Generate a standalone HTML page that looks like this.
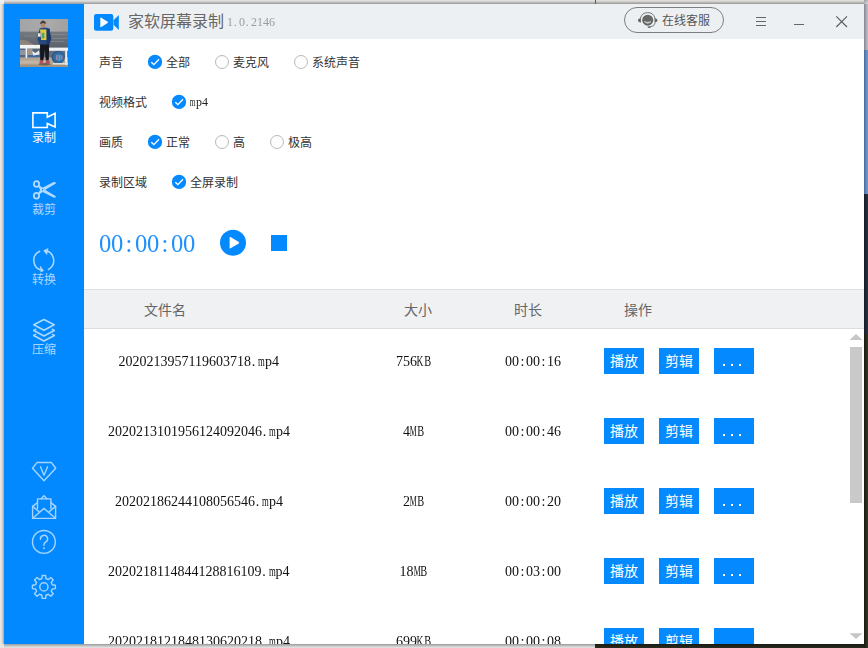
<!DOCTYPE html>
<html lang="zh-CN"><head><meta charset="utf-8"><title>家软屏幕录制</title>
<style>
html,body{margin:0;padding:0}
body{width:868px;height:648px;overflow:hidden;position:relative;background:#e9e9ea;font-family:"Liberation Serif",serif}
.bg{position:absolute}
#win{position:absolute;left:4px;top:4px;width:860px;height:640px;overflow:hidden;background:#fff}
.zh,.ic{position:absolute;display:block;overflow:visible}
.zh text{font-family:"Liberation Sans","Noto Sans CJK SC",sans-serif}
.lat{position:absolute;opacity:.999;white-space:nowrap;font-family:"Liberation Serif",serif}
.lat .c{display:inline-block;text-align:center;overflow:visible}
.lat .q{display:inline-block;transform-origin:50% 50%;margin:0 -4px}
.sr{position:absolute;width:1px;height:1px;overflow:hidden;clip:rect(0 0 0 0);white-space:nowrap}
</style></head>
<body>

<div class="bg" style="left:0;top:0;width:868px;height:4px;background:linear-gradient(#e6e6e7,#d3d3d5 35%,#b5b5b8 65%,#97979b)"></div>
<div class="bg" style="left:596px;top:0;width:272px;height:4px;background:linear-gradient(#e6e4e0,#d3d1cd 35%,#b6b4b1 65%,#989795)"></div>
<div class="bg" style="left:595px;top:0;width:1px;height:4px;background:#5a5a5a"></div>
<div class="bg" style="left:0;top:0;width:4px;height:648px;background:linear-gradient(to right,#eeece8,#e3e0db 35%,#cdc7c1 65%,#aea69f)"></div>
<div class="bg" style="left:0;top:0;width:4px;height:4px;background:#eef0ef"></div>
<div class="bg" style="left:0;top:644px;width:595px;height:4px;background:linear-gradient(#989898,#b8b8b8 35%,#d2d2d2 65%,#e6e6e6)"></div>
<div class="bg" style="left:0;top:644px;width:4px;height:4px;background:#e9e6e1"></div>
<div class="bg" style="left:595px;top:644px;width:273px;height:4px;background:linear-gradient(#191b13,#2a2c20)"></div>
<div class="bg" style="left:864px;top:0;width:4px;height:50px;background:linear-gradient(to right,#85868c,#9b9ca4 35%,#aeafb9 65%,#bdbeca)"></div>
<div class="bg" style="left:864px;top:0;width:4px;height:4px;background:linear-gradient(135deg,#9a9ba0,#d8d9de)"></div>
<div class="bg" style="left:864px;top:50px;width:4px;height:144px;background:linear-gradient(to right,#49699b,#5b7db2 35%,#6a8dc2 65%,#7497cb)"></div>
<div class="bg" style="left:864px;top:194px;width:4px;height:140px;background:linear-gradient(to right,#171c27,#2a3140)"></div>
<div class="bg" style="left:864px;top:334px;width:4px;height:314px;background:linear-gradient(to right,#191b12,#35372a)"></div>
<div id="win">
<aside>
<div style="position:absolute;left:0px;top:0px;width:80px;height:640px;background:#0288ff"></div>
<svg class="ic" style="left:16px;top:15px" width="48" height="48" viewBox="0 0 48 48"><defs><filter id="bl" x="-5%" y="-5%" width="110%" height="110%"><feGaussianBlur stdDeviation="0.6"/></filter><clipPath id="ac"><rect width="48" height="48"/></clipPath><linearGradient id="sk" x1="0" y1="0" x2="1" y2="0"><stop offset="0" stop-color="#a2a4a6"/><stop offset=".6" stop-color="#a9aaab"/><stop offset="1" stop-color="#a39f9c"/></linearGradient><linearGradient id="se" x1="0" y1="0" x2="0" y2="1"><stop offset="0" stop-color="#747a80"/><stop offset=".5" stop-color="#666d75"/><stop offset="1" stop-color="#59616b"/></linearGradient></defs><g clip-path="url(#ac)"><g filter="url(#bl)"><rect x="-2" y="-2" width="52" height="15" fill="url(#sk)"/><rect x="-2" y="12.6" width="52" height="17" fill="url(#se)"/><path d="M30 15.5 H46 M4 17 H16 M32 19.5 H48 M28 22.5 H44" stroke="#868c92" stroke-width=".7" fill="none"/><path d="M-2 20.5 L7 21.6 L15 26.5 L-2 26.5Z" fill="#8b847b"/><rect x="-2" y="29" width="52" height="10" fill="#56667c"/><rect x="28" y="31" width="22" height="10" fill="#5d6f86"/><rect x="7.4" y="29.6" width="5" height="7" fill="#a39688"/><rect x="-2" y="31" width="7" height="5" fill="#8c96a2"/><rect x="8" y="36" width="13" height="2.6" fill="#3d6ca4"/><path d="M12 32 L15.5 34 L19 31.6 L19.6 35.6 L13 36.4Z" fill="#e9ecee"/><rect x="-2" y="38.4" width="52" height="12" fill="#b3a595"/><rect x="-2" y="41.6" width="30" height="3" fill="#c3b5a5"/><rect x="-2" y="45.6" width="52" height="5" fill="#a3937e"/><circle cx="38.2" cy="38.4" r="6.5" fill="#2a4f78"/><circle cx="38.6" cy="38.4" r="5.7" fill="#2f6ca4"/><circle cx="39" cy="38.6" r="3.2" fill="#4c86b6"/><path d="M36.6 36 V41 M39.4 35.6 V41.6 M42 36.4 V40.6" stroke="#b48aa6" stroke-width=".8"/><rect x="-2" y="25.9" width="23" height="3.6" fill="#f3f4f4"/><rect x="28.5" y="28.6" width="21" height="3.2" fill="#f0f1f2"/><rect x="5.5" y="28" width="1.7" height="11" fill="#f0f1f1"/><rect x="45.2" y="30" width="1.9" height="16" fill="#eef0f0"/><rect x="33" y="44" width="15" height="1.5" fill="#dfe1e1"/><ellipse cx="24.5" cy="45.2" rx="6" ry="1.3" fill="#6f6258"/><path d="M20 23 H29.2 L28.8 41.5 H25.8 L24.8 30 L23.4 41.5 H20.2Z" fill="#14161b"/><path d="M19.6 9.4 Q24.4 7.6 29.4 9.6 L31.2 19.6 L29.6 25.4 H19.4 L17.4 20.4 Z" fill="#25487f"/><path d="M26.6 10 L29.4 9.8 L31 19.6 L29.4 25 H26.6Z" fill="#1d3868"/><path d="M20 10.6 H26.4 V21 H21.2Z" fill="#e2cb42"/><rect x="21.7" y="13.8" width="2.6" height="5.6" fill="#55a262"/><rect x="18" y="14.3" width="2.6" height="3.4" fill="#e8eaec"/><ellipse cx="23" cy="5.4" rx="2.4" ry="2.9" fill="#b48a6c"/><path d="M20.4 4.4 Q23 -0.4 25.7 4.2 Q23 2.8 20.4 4.4Z" fill="#3c342e" stroke="#3c342e" stroke-width=".9"/><ellipse cx="21.3" cy="43" rx="2" ry="1.7" fill="#b8485f"/><ellipse cx="27.7" cy="43.2" rx="2" ry="1.7" fill="#b8485f"/></g></g></svg>
<svg class="ic" style="left:26px;top:106px" width="28" height="20" viewBox="0 0 28 20"><path d="M2.9 2.9 H17.3 V7.3 L25.1 3.4 V17 L17.3 13.4 V17.5 H2.9 Z" fill="none" stroke="#fff" stroke-width="1.6" stroke-linejoin="miter"/></svg>
<svg class="zh" style="left:27.6px;top:127px" width="24" height="14" fill="#fff"><text x="0" y="10.86" font-size="12">录制</text></svg>
<svg class="ic" style="left:26px;top:174px" width="28" height="24" viewBox="0 0 28 24"><g opacity=".7"><g fill="none" stroke="#fff" stroke-width="1.8"><ellipse cx="6.5" cy="5.95" rx="2.6" ry="2.85"/><ellipse cx="6.5" cy="17.8" rx="2.6" ry="2.85"/></g><g fill="#fff"><path d="M8.3 15 L11 10.5 L23.6 4.1 Q25.6 3.8 25.9 4.9 Q25.8 5.6 25 6 L15.8 11.4 L9.6 16.3 Z"/><path d="M8.3 8.7 L11 13.2 L23.6 19.6 Q25.6 19.9 25.9 18.8 Q25.8 18.1 25 17.7 L15.8 12.3 L9.6 7.4 Z"/></g><circle cx="12.6" cy="11.85" r=".75" fill="#0288ff"/></g></svg>
<svg class="zh" style="left:27.6px;top:199px" width="24" height="14" fill="rgba(255,255,255,.68)"><text x="0" y="10.86" font-size="12">裁剪</text></svg>
<svg class="ic" style="left:26px;top:244px" width="28" height="26" viewBox="0 0 28 26"><g opacity=".68"><g fill="none" stroke="#fff" stroke-width="1.5" stroke-linecap="round"><path d="M9.7 3.2 A10.1 10.1 0 0 0 11.6 22.2"/><path d="M18.5 21.5 A10.1 10.1 0 0 0 15.8 2.8"/></g><path d="M13.6 22.7 L10.3 18.2 L10.9 23.9 Z M13.6 2.6 L18.1 0.5 L16.8 6.5 Z" fill="#fff" stroke="#fff" stroke-width=".6" stroke-linejoin="round"/></g></svg>
<svg class="zh" style="left:27.6px;top:269px" width="24" height="14" fill="rgba(255,255,255,.68)"><text x="0" y="10.86" font-size="12">转换</text></svg>
<svg class="ic" style="left:26px;top:312px" width="28" height="28" viewBox="0 0 28 28"><g fill="none" stroke="#fff" stroke-width="1.7" opacity=".68" stroke-linejoin="round" stroke-linecap="round"><path d="M13.9 3.5 L24.2 8.7 L13.9 14.3 L3.8 8.7 Z"/><path d="M5.6 13.5 L3.7 14.5 L13.9 19.9 L24.3 14.5 L22.4 13.5"/><path d="M5.6 18.6 L3.7 19.6 L13.9 25 L24.3 19.6 L22.4 18.6"/></g></svg>
<svg class="zh" style="left:27.6px;top:339px" width="24" height="14" fill="rgba(255,255,255,.68)"><text x="0" y="10.86" font-size="12">压缩</text></svg>
<svg class="ic" style="left:26px;top:456px" width="28" height="24" viewBox="0 0 28 24"><g fill="none" stroke="#fff" stroke-width="1.45" opacity=".64" stroke-linejoin="round" stroke-linecap="round"><path d="M6.9 2.6 H21.5 L25.7 8.3 L14 20.8 L2.5 8.3 Z"/><path d="M10.5 6.8 L14 15.2 L17.6 6.8"/></g></svg>
<svg class="ic" style="left:26px;top:489px" width="28" height="28" viewBox="0 0 28 28"><g fill="none" stroke="#fff" stroke-width="1.4" opacity=".64" stroke-linejoin="round" stroke-linecap="round"><path d="M2.6 13.4 V25.4 H25.6 V13.4"/><path d="M2.6 13.4 L7.5 9.6 M25.6 13.4 L20.9 9.6"/><path d="M11.3 5.8 L14 2.6 L16.9 5.8"/><path d="M7.5 15.6 V5.9 H20.9 V15.6"/><path d="M2.6 13.4 L9 18.6 M25.6 13.4 L19.2 18.6"/><path d="M3 25 L14 15.4 L25.2 25"/></g></svg>
<svg class="ic" style="left:26px;top:524px" width="28" height="28" viewBox="0 0 28 28"><g fill="none" stroke="#fff" stroke-width="1.45" opacity=".64" stroke-linecap="round"><circle cx="13.9" cy="13.9" r="11.4"/><path d="M10.4 11.2 A3.6 3.6 0 1 1 15.6 14.2 Q13.9 15.3 13.9 17.2"/></g><circle cx="13.9" cy="20.3" r="0.95" fill="#fff" opacity=".62"/></svg>
<svg class="ic" style="left:26px;top:569px" width="28" height="28" viewBox="0 0 28 28"><g fill="none" stroke="#fff" stroke-width="1.45" opacity=".64" stroke-linejoin="round"><path d="M12.18 2.43 L15.62 2.43 L15.97 5.55 L18.34 6.53 L20.79 4.57 L23.23 7.01 L21.27 9.46 L22.25 11.83 L25.37 12.18 L25.37 15.62 L22.25 15.97 L21.27 18.34 L23.23 20.79 L20.79 23.23 L18.34 21.27 L15.97 22.25 L15.62 25.37 L12.18 25.37 L11.83 22.25 L9.46 21.27 L7.01 23.23 L4.57 20.79 L6.53 18.34 L5.55 15.97 L2.43 15.62 L2.43 12.18 L5.55 11.83 L6.53 9.46 L4.57 7.01 L7.01 4.57 L9.46 6.53 L11.83 5.55Z"/><circle cx="13.9" cy="13.9" r="4.1"/></g></svg>
</aside>
<header>
<div style="position:absolute;left:80px;top:0px;width:780px;height:35px;background:#edf0f3"></div>
<svg class="ic" style="left:88px;top:8px" width="30" height="22" viewBox="0 0 30 22"><rect x="2" y="2.1" width="19.3" height="16.7" rx="2.2" fill="#0288ff"/><path d="M21.6 8.2 L26.8 3.1 V17.9 L21.6 12.8 Z" fill="#0288ff"/><path d="M8.3 6.2 Q8.3 5.2 9.3 5.7 L15.6 9.7 Q16.4 10.4 15.6 11.1 L9.3 15.1 Q8.3 15.6 8.3 14.6 Z" fill="#fff"/></svg>
<svg class="zh" style="left:123.6px;top:9px" width="96" height="18" fill="#666"><text x="0" y="14.48" font-size="16">家软屏幕录制</text></svg>
<div class="lat " style="left:223px;top:12px;font-size:12px;line-height:12px;color:#9a9a9a">1<span class="c" style="width:6px;text-align:left;text-indent:0.7px">.</span>0<span class="c" style="width:6px;text-align:left;text-indent:0.7px">.</span>2146</div>
<div style="position:absolute;left:620px;top:3px;width:98px;height:24px;border:1px solid #7e7e7e;border-radius:13px"></div>
<svg class="ic" style="left:632px;top:6px" width="24" height="20" viewBox="0 0 24 20"><circle cx="11.7" cy="10.2" r="5.5" fill="#666"/><path d="M8.4 11.5 Q11.7 15 15 11.5 Q11.7 13.3 8.4 11.5Z" fill="#e8eaec" stroke="#e8eaec" stroke-width=".5"/><path d="M4.4 8.4 A7.5 7.5 0 0 1 19 8.4" fill="none" stroke="#6a6a6a" stroke-width=".9"/><path d="M4.9 7.8 L2.2 9.3 Q1.7 10.4 2.2 11.5 L4.9 12.8 Z M18.5 7.8 L21.2 9.3 Q21.7 10.4 21.2 11.5 L18.5 12.8 Z" fill="#666"/><path d="M19.4 12.6 Q18.6 16.4 13.8 17.1" fill="none" stroke="#6a6a6a" stroke-width=".9"/><ellipse cx="13.1" cy="17.1" rx="1.5" ry=".85" fill="#666"/></svg>
<svg class="zh" style="left:657.6px;top:10px" width="48" height="14" fill="#555"><text x="0" y="10.86" font-size="12">在线客服</text></svg>
<div style="position:absolute;left:752px;top:13px;width:10px;height:1px;background:#666"></div><div style="position:absolute;left:752px;top:17px;width:10px;height:1px;background:#666"></div><div style="position:absolute;left:752px;top:21px;width:10px;height:1px;background:#666"></div>
<div style="position:absolute;left:790px;top:20px;width:10px;height:1px;background:#666"></div>
<svg class="ic" style="left:830px;top:10px" width="16" height="16" viewBox="0 0 16 16"><path d="M2.3 2.3 L13 13 M13 2.3 L2.3 13" stroke="#5a5a5a" stroke-width="1.1" fill="none"/></svg>
</header>
<main>
<section>
<svg class="zh" style="left:94.6px;top:52px" width="24" height="14" fill="#333"><text x="0" y="10.86" font-size="12">声音</text></svg>
<svg class="ic" style="left:143px;top:50px" width="16" height="16" viewBox="0 0 16 16"><circle cx="8" cy="7.9" r="7.15" fill="#0589ff"/><path d="M4.3 8.2 L6.9 10.6 L12 5.2" fill="none" stroke="#fff" stroke-width="1.3"/></svg>
<svg class="zh" style="left:161.6px;top:52px" width="24" height="14" fill="#333"><text x="0" y="10.86" font-size="12">全部</text></svg>
<svg class="ic" style="left:210px;top:50px" width="16" height="16" viewBox="0 0 16 16"><circle cx="8" cy="8" r="6.5" fill="#fdfdfd" stroke="#b9b9b9" stroke-width="1"/></svg>
<svg class="zh" style="left:228.6px;top:52px" width="36" height="14" fill="#333"><text x="0" y="10.86" font-size="12">麦克风</text></svg>
<svg class="ic" style="left:289px;top:50px" width="16" height="16" viewBox="0 0 16 16"><circle cx="8" cy="8" r="6.5" fill="#fdfdfd" stroke="#b9b9b9" stroke-width="1"/></svg>
<svg class="zh" style="left:307.6px;top:52px" width="48" height="14" fill="#333"><text x="0" y="10.86" font-size="12">系统声音</text></svg>
<svg class="zh" style="left:94.6px;top:92px" width="48" height="14" fill="#333"><text x="0" y="10.86" font-size="12">视频格式</text></svg>
<svg class="ic" style="left:167px;top:90px" width="16" height="16" viewBox="0 0 16 16"><circle cx="8" cy="7.9" r="7.15" fill="#0589ff"/><path d="M4.3 8.2 L6.9 10.6 L12 5.2" fill="none" stroke="#fff" stroke-width="1.3"/></svg>
<div class="lat " style="left:186px;top:92px;font-size:12px;line-height:12px;color:#222"><span class="c" style="width:6px"><span class="q" style="transform:scaleX(0.62)">m</span></span>p4</div>
<svg class="zh" style="left:94.6px;top:132px" width="24" height="14" fill="#333"><text x="0" y="10.86" font-size="12">画质</text></svg>
<svg class="ic" style="left:143px;top:130px" width="16" height="16" viewBox="0 0 16 16"><circle cx="8" cy="7.9" r="7.15" fill="#0589ff"/><path d="M4.3 8.2 L6.9 10.6 L12 5.2" fill="none" stroke="#fff" stroke-width="1.3"/></svg>
<svg class="zh" style="left:161.6px;top:132px" width="24" height="14" fill="#333"><text x="0" y="10.86" font-size="12">正常</text></svg>
<svg class="ic" style="left:210px;top:130px" width="16" height="16" viewBox="0 0 16 16"><circle cx="8" cy="8" r="6.5" fill="#fdfdfd" stroke="#b9b9b9" stroke-width="1"/></svg>
<svg class="zh" style="left:228.6px;top:132px" width="12" height="14" fill="#333"><text x="0" y="10.86" font-size="12">高</text></svg>
<svg class="ic" style="left:265px;top:130px" width="16" height="16" viewBox="0 0 16 16"><circle cx="8" cy="8" r="6.5" fill="#fdfdfd" stroke="#b9b9b9" stroke-width="1"/></svg>
<svg class="zh" style="left:283.6px;top:132px" width="24" height="14" fill="#333"><text x="0" y="10.86" font-size="12">极高</text></svg>
<svg class="zh" style="left:94.6px;top:172px" width="48" height="14" fill="#333"><text x="0" y="10.86" font-size="12">录制区域</text></svg>
<svg class="ic" style="left:167px;top:170px" width="16" height="16" viewBox="0 0 16 16"><circle cx="8" cy="7.9" r="7.15" fill="#0589ff"/><path d="M4.3 8.2 L6.9 10.6 L12 5.2" fill="none" stroke="#fff" stroke-width="1.3"/></svg>
<svg class="zh" style="left:185.6px;top:172px" width="48" height="14" fill="#333"><text x="0" y="10.86" font-size="12">全屏录制</text></svg>
<div class="lat " style="left:95px;top:227.6px;font-size:24.6px;line-height:24.6px;color:#1e90ff"><span class="c" style="width:12px">0</span><span class="c" style="width:12px">0</span><span class="c" style="width:12px">:</span><span class="c" style="width:12px">0</span><span class="c" style="width:12px">0</span><span class="c" style="width:12px">:</span><span class="c" style="width:12px">0</span><span class="c" style="width:12px">0</span></div>
<svg class="ic" style="left:215px;top:225px" width="28" height="28" viewBox="0 0 28 28"><circle cx="14" cy="13.7" r="13" fill="#0589ff"/><path d="M10.6 8.6 Q10.6 7.6 11.5 8.1 L19.8 13 Q20.6 13.7 19.8 14.4 L11.5 19.3 Q10.6 19.8 10.6 18.8 Z" fill="#fff"/></svg>
<div style="position:absolute;left:267px;top:231px;width:16px;height:16px;background:#0589ff"></div>
</section>
<section>
<div style="position:absolute;left:80px;top:285px;width:780px;height:40px;background:#f0f1f3;border-top:1px solid #dedfe1;border-bottom:1px solid #dcdddf;box-sizing:border-box"></div>
<svg class="zh" style="left:139.6px;top:298px" width="42" height="16" fill="#666"><text x="0" y="12.67" font-size="14">文件名</text></svg>
<svg class="zh" style="left:399.6px;top:298px" width="28" height="16" fill="#666"><text x="0" y="12.67" font-size="14">大小</text></svg>
<svg class="zh" style="left:509.6px;top:298px" width="28" height="16" fill="#666"><text x="0" y="12.67" font-size="14">时长</text></svg>
<svg class="zh" style="left:619.6px;top:298px" width="28" height="16" fill="#666"><text x="0" y="12.67" font-size="14">操作</text></svg>
<div class="lat " style="left:114.5px;top:351.4px;font-size:14px;line-height:14px;color:#111">2020213957119603718<span class="c" style="width:7px;text-align:left;text-indent:0.8px">.</span><span class="c" style="width:7px"><span class="q" style="transform:scaleX(0.62)">m</span></span>p4</div>
<div class="lat " style="left:392px;top:351.4px;font-size:14px;line-height:14px;color:#111">756<span class="c" style="width:7px"><span class="q" style="transform:scaleX(0.68)">K</span></span><span class="c" style="width:7px"><span class="q" style="transform:scaleX(0.74)">B</span></span></div>
<div class="lat " style="left:501px;top:351.4px;font-size:14px;line-height:14px;color:#111">00<span class="c" style="width:7px">:</span>00<span class="c" style="width:7px">:</span>16</div>
<div style="position:absolute;left:600px;top:344px;width:40px;height:26px;background:#0589ff"></div>
<svg class="zh" style="left:605.6px;top:349px" width="28" height="16" fill="#fff"><text x="0" y="12.67" font-size="14">播放</text></svg>
<div style="position:absolute;left:655px;top:344px;width:40px;height:26px;background:#0589ff"></div>
<svg class="zh" style="left:660.6px;top:349px" width="28" height="16" fill="#fff"><text x="0" y="12.67" font-size="14">剪辑</text></svg>
<div style="position:absolute;left:710px;top:344px;width:40px;height:26px;background:#0589ff"></div>
<div style="position:absolute;left:719px;top:360px;width:2px;height:2px;background:#fff"></div><div style="position:absolute;left:727px;top:360px;width:2px;height:2px;background:#fff"></div><div style="position:absolute;left:735px;top:360px;width:2px;height:2px;background:#fff"></div><span class="sr">...</span>
<div class="lat " style="left:104px;top:421.4px;font-size:14px;line-height:14px;color:#111">2020213101956124092046<span class="c" style="width:7px;text-align:left;text-indent:0.8px">.</span><span class="c" style="width:7px"><span class="q" style="transform:scaleX(0.62)">m</span></span>p4</div>
<div class="lat " style="left:399px;top:421.4px;font-size:14px;line-height:14px;color:#111">4<span class="c" style="width:7px"><span class="q" style="transform:scaleX(0.56)">M</span></span><span class="c" style="width:7px"><span class="q" style="transform:scaleX(0.74)">B</span></span></div>
<div class="lat " style="left:501px;top:421.4px;font-size:14px;line-height:14px;color:#111">00<span class="c" style="width:7px">:</span>00<span class="c" style="width:7px">:</span>46</div>
<div style="position:absolute;left:600px;top:414px;width:40px;height:26px;background:#0589ff"></div>
<svg class="zh" style="left:605.6px;top:419px" width="28" height="16" fill="#fff"><text x="0" y="12.67" font-size="14">播放</text></svg>
<div style="position:absolute;left:655px;top:414px;width:40px;height:26px;background:#0589ff"></div>
<svg class="zh" style="left:660.6px;top:419px" width="28" height="16" fill="#fff"><text x="0" y="12.67" font-size="14">剪辑</text></svg>
<div style="position:absolute;left:710px;top:414px;width:40px;height:26px;background:#0589ff"></div>
<div style="position:absolute;left:719px;top:430px;width:2px;height:2px;background:#fff"></div><div style="position:absolute;left:727px;top:430px;width:2px;height:2px;background:#fff"></div><div style="position:absolute;left:735px;top:430px;width:2px;height:2px;background:#fff"></div><span class="sr">...</span>
<div class="lat " style="left:111px;top:491.4px;font-size:14px;line-height:14px;color:#111">20202186244108056546<span class="c" style="width:7px;text-align:left;text-indent:0.8px">.</span><span class="c" style="width:7px"><span class="q" style="transform:scaleX(0.62)">m</span></span>p4</div>
<div class="lat " style="left:399px;top:491.4px;font-size:14px;line-height:14px;color:#111">2<span class="c" style="width:7px"><span class="q" style="transform:scaleX(0.56)">M</span></span><span class="c" style="width:7px"><span class="q" style="transform:scaleX(0.74)">B</span></span></div>
<div class="lat " style="left:501px;top:491.4px;font-size:14px;line-height:14px;color:#111">00<span class="c" style="width:7px">:</span>00<span class="c" style="width:7px">:</span>20</div>
<div style="position:absolute;left:600px;top:484px;width:40px;height:26px;background:#0589ff"></div>
<svg class="zh" style="left:605.6px;top:489px" width="28" height="16" fill="#fff"><text x="0" y="12.67" font-size="14">播放</text></svg>
<div style="position:absolute;left:655px;top:484px;width:40px;height:26px;background:#0589ff"></div>
<svg class="zh" style="left:660.6px;top:489px" width="28" height="16" fill="#fff"><text x="0" y="12.67" font-size="14">剪辑</text></svg>
<div style="position:absolute;left:710px;top:484px;width:40px;height:26px;background:#0589ff"></div>
<div style="position:absolute;left:719px;top:500px;width:2px;height:2px;background:#fff"></div><div style="position:absolute;left:727px;top:500px;width:2px;height:2px;background:#fff"></div><div style="position:absolute;left:735px;top:500px;width:2px;height:2px;background:#fff"></div><span class="sr">...</span>
<div class="lat " style="left:104px;top:561.4px;font-size:14px;line-height:14px;color:#111">2020218114844128816109<span class="c" style="width:7px;text-align:left;text-indent:0.8px">.</span><span class="c" style="width:7px"><span class="q" style="transform:scaleX(0.62)">m</span></span>p4</div>
<div class="lat " style="left:395.5px;top:561.4px;font-size:14px;line-height:14px;color:#111">18<span class="c" style="width:7px"><span class="q" style="transform:scaleX(0.56)">M</span></span><span class="c" style="width:7px"><span class="q" style="transform:scaleX(0.74)">B</span></span></div>
<div class="lat " style="left:501px;top:561.4px;font-size:14px;line-height:14px;color:#111">00<span class="c" style="width:7px">:</span>03<span class="c" style="width:7px">:</span>00</div>
<div style="position:absolute;left:600px;top:554px;width:40px;height:26px;background:#0589ff"></div>
<svg class="zh" style="left:605.6px;top:559px" width="28" height="16" fill="#fff"><text x="0" y="12.67" font-size="14">播放</text></svg>
<div style="position:absolute;left:655px;top:554px;width:40px;height:26px;background:#0589ff"></div>
<svg class="zh" style="left:660.6px;top:559px" width="28" height="16" fill="#fff"><text x="0" y="12.67" font-size="14">剪辑</text></svg>
<div style="position:absolute;left:710px;top:554px;width:40px;height:26px;background:#0589ff"></div>
<div style="position:absolute;left:719px;top:570px;width:2px;height:2px;background:#fff"></div><div style="position:absolute;left:727px;top:570px;width:2px;height:2px;background:#fff"></div><div style="position:absolute;left:735px;top:570px;width:2px;height:2px;background:#fff"></div><span class="sr">...</span>
<div class="lat " style="left:104px;top:631.4px;font-size:14px;line-height:14px;color:#111">2020218121848130620218<span class="c" style="width:7px;text-align:left;text-indent:0.8px">.</span><span class="c" style="width:7px"><span class="q" style="transform:scaleX(0.62)">m</span></span>p4</div>
<div class="lat " style="left:392px;top:631.4px;font-size:14px;line-height:14px;color:#111">699<span class="c" style="width:7px"><span class="q" style="transform:scaleX(0.68)">K</span></span><span class="c" style="width:7px"><span class="q" style="transform:scaleX(0.74)">B</span></span></div>
<div class="lat " style="left:501px;top:631.4px;font-size:14px;line-height:14px;color:#111">00<span class="c" style="width:7px">:</span>00<span class="c" style="width:7px">:</span>08</div>
<div style="position:absolute;left:600px;top:624px;width:40px;height:26px;background:#0589ff"></div>
<svg class="zh" style="left:605.6px;top:629px" width="28" height="16" fill="#fff"><text x="0" y="12.67" font-size="14">播放</text></svg>
<div style="position:absolute;left:655px;top:624px;width:40px;height:26px;background:#0589ff"></div>
<svg class="zh" style="left:660.6px;top:629px" width="28" height="16" fill="#fff"><text x="0" y="12.67" font-size="14">剪辑</text></svg>
<div style="position:absolute;left:710px;top:624px;width:40px;height:26px;background:#0589ff"></div>
<div style="position:absolute;left:719px;top:640px;width:2px;height:2px;background:#fff"></div><div style="position:absolute;left:727px;top:640px;width:2px;height:2px;background:#fff"></div><div style="position:absolute;left:735px;top:640px;width:2px;height:2px;background:#fff"></div><span class="sr">...</span>
<svg class="ic" style="left:844px;top:328px" width="16" height="10" viewBox="0 0 16 10"><path d="M8 2 L14.5 8 H1.5 Z" fill="#c6c6c6"/></svg>
<div style="position:absolute;left:846px;top:343px;width:12px;height:156px;background:#c9c9c9"></div>
<svg class="ic" style="left:844px;top:627px" width="16" height="10" viewBox="0 0 16 10"><path d="M1.5 2.2 H14.5 L8 8 Z" fill="#c6c6c6"/></svg>
</section>
</main>
</div>
</body></html>
